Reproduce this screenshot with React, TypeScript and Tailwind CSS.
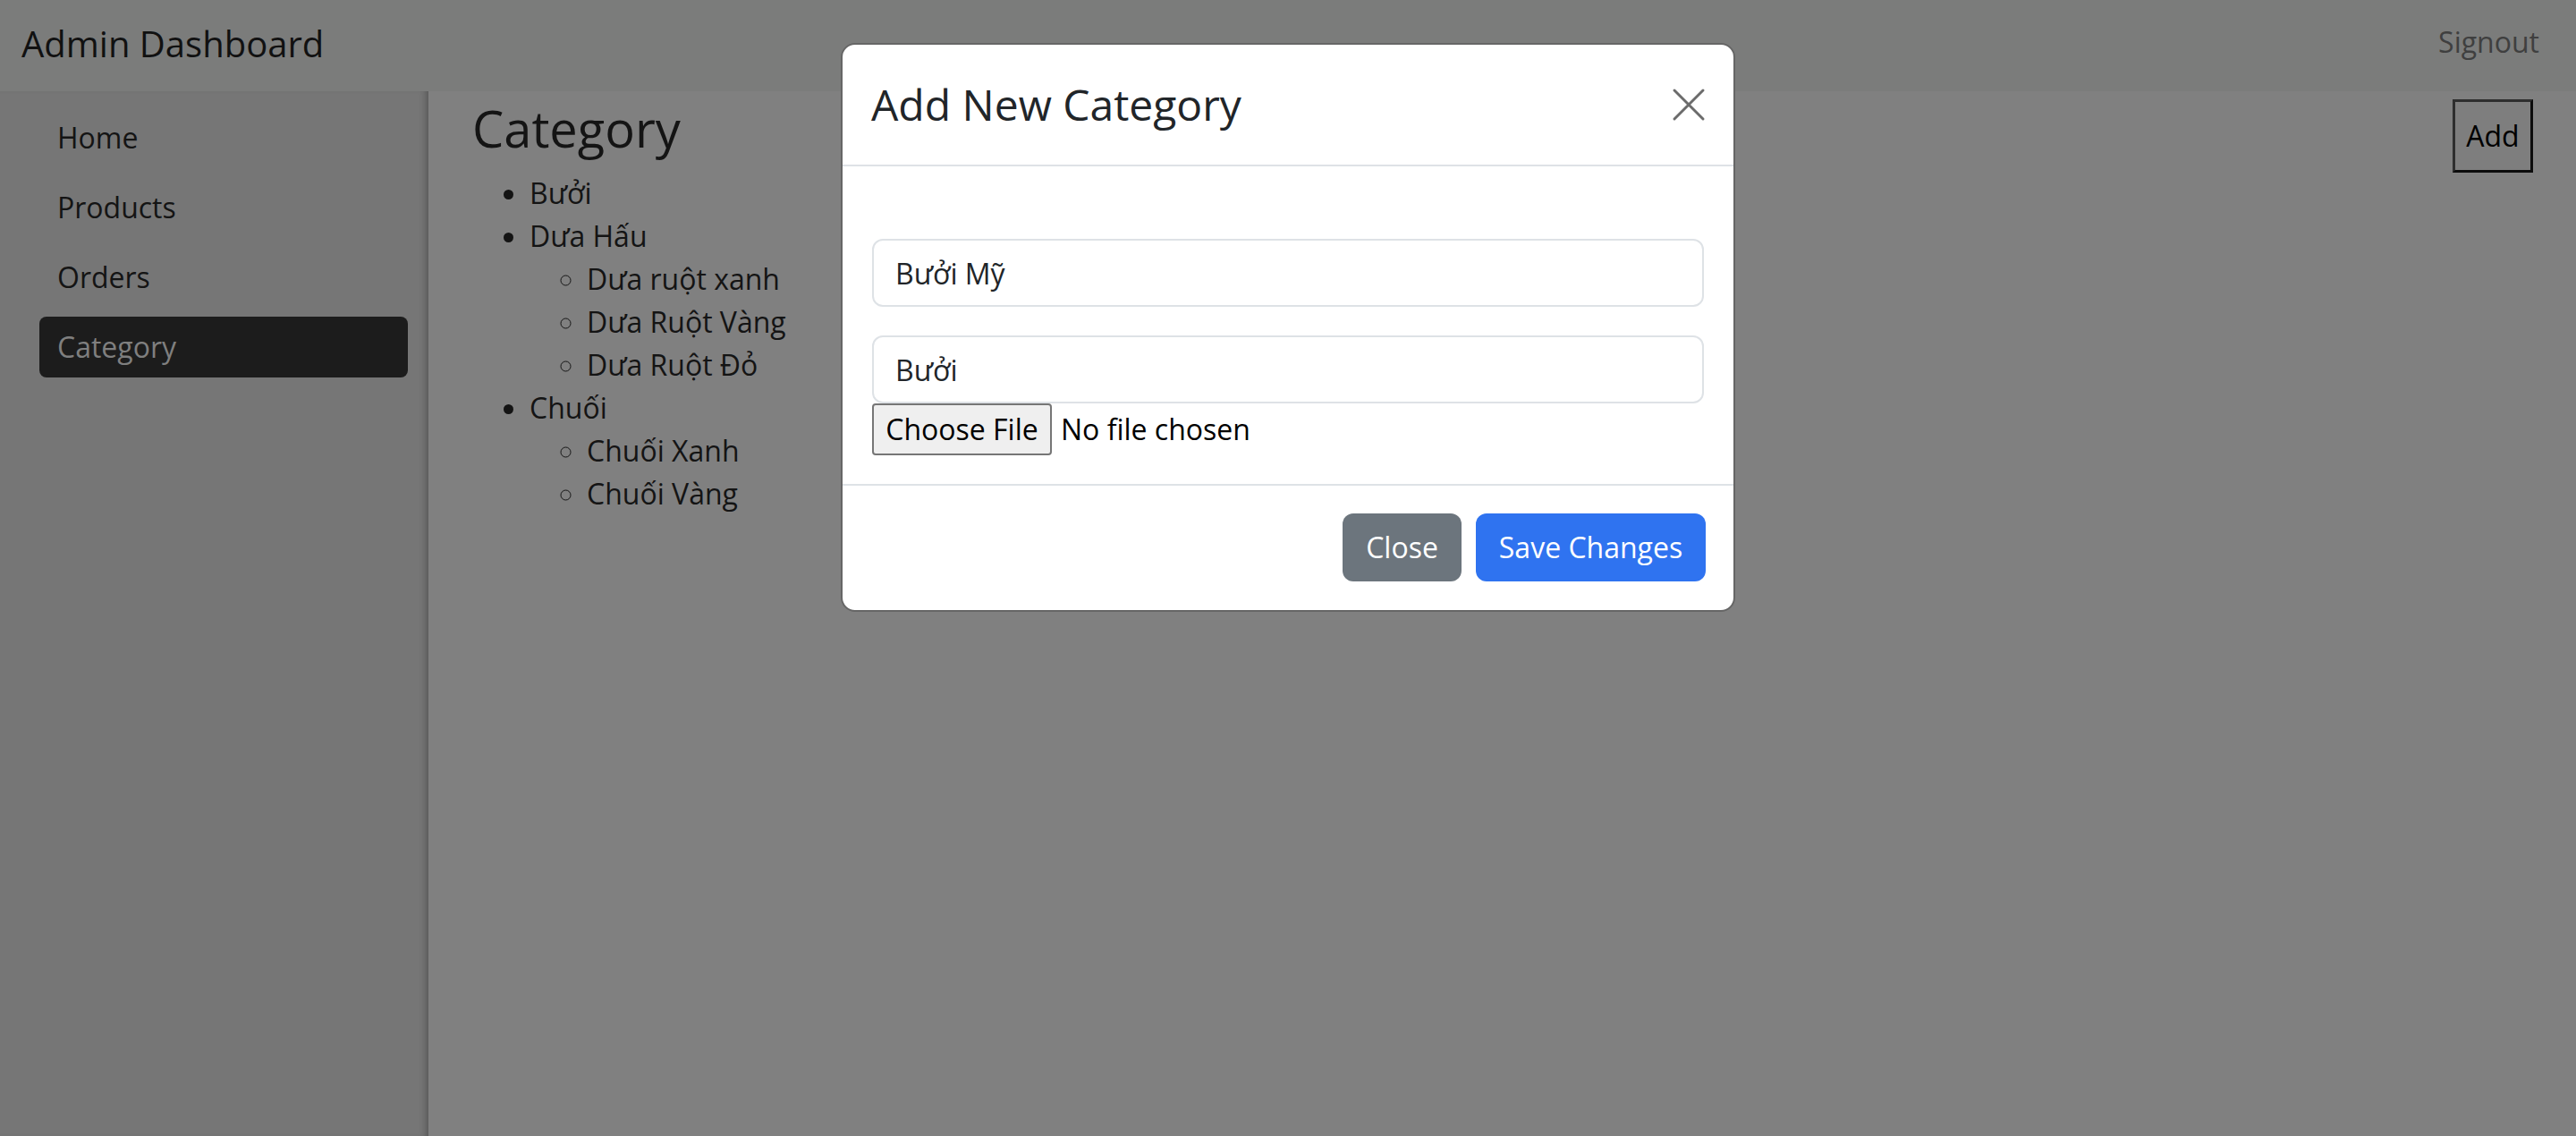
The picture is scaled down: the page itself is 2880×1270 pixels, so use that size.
import React from 'react';

const font = { fontFamily: '"Open Sans", "Noto Sans", sans-serif' };

const navItems = ['Home', 'Products', 'Orders', 'Category'];

export default function App() {
  return (
    <div className="relative min-h-[1270px] w-[2880px] overflow-hidden bg-[#808080] text-[#141414]" style={font}>
      {/* top bar */}
      <header className="flex h-[102px] items-center justify-between bg-[#7b7c7b] pl-[24px] pr-[41px]">
        <span className="pb-[4px] text-[40px] leading-[60px] text-[#111111]">Admin Dashboard</span>
        <span className="pb-[8px] text-[32px] leading-[48px] text-[#3f3f3f]">Signout</span>
      </header>

      <div className="flex min-h-[1168px]">
        {/* sidebar */}
        <aside className="w-[479px] shrink-0 bg-[#767676] pt-[18px] shadow-[inset_-8px_0_8px_-6px_rgba(0,0,0,0.3)]">
          <ul className="flex flex-col gap-[10px] pl-[44px] pr-[23px]">
            {navItems.map((item) => (
              <li
                key={item}
                className={
                  item === 'Category'
                    ? 'flex h-[68px] items-center rounded-[8px] bg-[#1c1c1c] pl-[20px] text-[32px] text-[#7f7f7f]'
                    : 'flex h-[68px] items-center pl-[20px] text-[32px] text-[#141414]'
                }
              >
                {item}
              </li>
            ))}
          </ul>
        </aside>

        {/* main */}
        <main className="flex flex-1 items-start justify-between pl-[49px] pr-[48px] pt-[8px]">
          <div>
            <h2 className="mb-[15px] text-[56px] leading-[67px] text-[#141414]">Category</h2>
            <ul className="list-disc pl-[64px] text-[32px] leading-[48px]">
              <li>Bưởi</li>
              <li>
                Dưa Hấu
                <ul className="list-[circle] pl-[64px]">
                  <li>Dưa ruột xanh</li>
                  <li>Dưa Ruột Vàng</li>
                  <li>Dưa Ruột Đỏ</li>
                </ul>
              </li>
              <li>
                Chuối
                <ul className="list-[circle] pl-[64px]">
                  <li>Chuối Xanh</li>
                  <li>Chuối Vàng</li>
                </ul>
              </li>
            </ul>
          </div>
          <button className="mt-[1px] h-[82px] w-[90px] border-[3px] border-b-[#0c0c0c] border-l-[#2e2e2e] border-r-[#0c0c0c] border-t-[#2e2e2e] bg-[#7e7e7e] text-[32px] text-black">
            Add
          </button>
        </main>
      </div>

      {/* modal */}
      <div className="absolute left-[940px] top-[48px] w-[1000px] overflow-hidden rounded-[16px] border-2 border-[#666666] bg-white text-[#212529]">
        <div className="flex h-[136px] items-center justify-between border-b-2 border-[#dee2e6] pl-[32px] pr-[29px]">
          <h5 className="text-[48px] leading-[60px]">Add New Category</h5>
          <svg width="38" height="38" viewBox="0 0 38 38" className="mr-[2px]">
            <path d="M3 3 L35 35 M35 3 L3 35" stroke="#6b6b6b" strokeWidth="3" strokeLinecap="round" />
          </svg>
        </div>

        <div className="px-[33px] pb-[32px] pt-[81px]">
          <input
            readOnly
            defaultValue="Bưởi Mỹ"
            className="mb-[32px] block h-[76px] w-full rounded-[12px] border-2 border-[#dee2e6] px-[24px] text-[32px] text-[#212529] outline-none"
          />
          <input
            readOnly
            defaultValue="Bưởi"
            className="block h-[76px] w-full rounded-[12px] border-2 border-[#dee2e6] px-[24px] text-[32px] text-[#212529] outline-none"
          />
          <div className="flex h-[58px] items-center gap-[10px]">
            <span className="flex h-[58px] w-[201px] items-center justify-center rounded-[4px] border-2 border-[#767676] bg-[#efefef] text-[32px] text-black">
              Choose File
            </span>
            <span className="text-[32px] text-black">No file chosen</span>
          </div>
        </div>

        <div className="flex h-[141px] items-center justify-end gap-[16px] border-t-2 border-[#dee2e6] pb-[2px] pr-[31px]">
          <button className="h-[76px] w-[133px] rounded-[12px] bg-[#6c757d] text-[32px] text-white">Close</button>
          <button className="h-[76px] w-[257px] rounded-[12px] bg-[#2f73f0] text-[32px] text-white">Save Changes</button>
        </div>
      </div>
    </div>
  );
}
